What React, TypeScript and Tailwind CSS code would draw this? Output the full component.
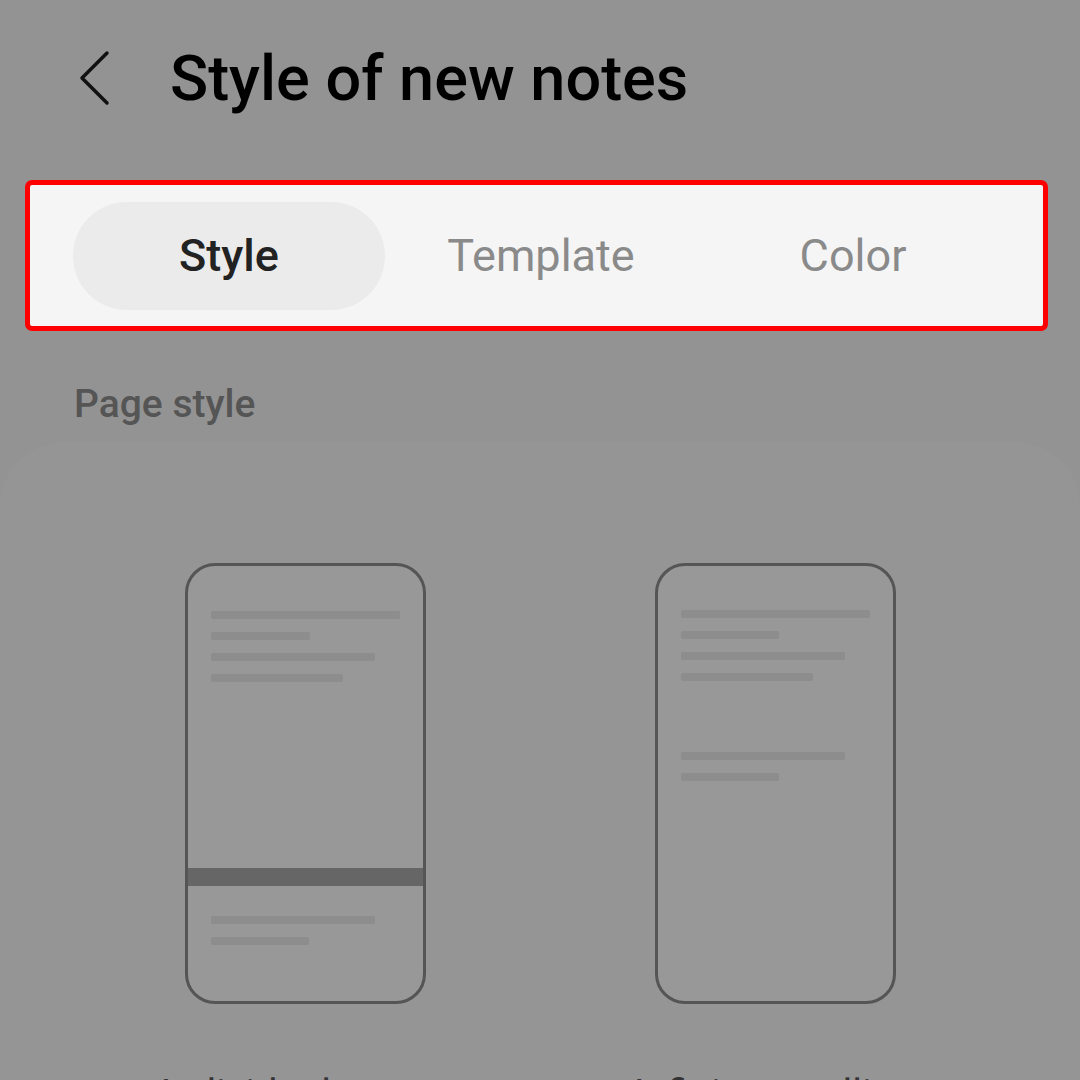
import React from "react";

function PhoneA() {
  return (
    <div className="w-[241px] h-[441px] rounded-[30px] border-[3px] border-[#555555] bg-[#989898] flex flex-col overflow-hidden">
      <div className="pl-[23px] pt-[45px] flex flex-col gap-[13px]">
        <div className="h-[8px] w-[189px] rounded-[2px] bg-[#8d8d8d]" />
        <div className="h-[8px] w-[99px] rounded-[2px] bg-[#8d8d8d]" />
        <div className="h-[8px] w-[164px] rounded-[2px] bg-[#8d8d8d]" />
        <div className="h-[8px] w-[132px] rounded-[2px] bg-[#8d8d8d]" />
      </div>
      <div className="mt-[186px] h-[18px] bg-[#666666]" />
      <div className="pl-[23px] pt-[30px] flex flex-col gap-[13px]">
        <div className="h-[8px] w-[164px] rounded-[2px] bg-[#8d8d8d]" />
        <div className="h-[8px] w-[98px] rounded-[2px] bg-[#8d8d8d]" />
      </div>
    </div>
  );
}

function PhoneB() {
  return (
    <div className="w-[241px] h-[441px] rounded-[30px] border-[3px] border-[#555555] bg-[#989898] flex flex-col overflow-hidden">
      <div className="pl-[23px] pt-[44px] flex flex-col gap-[13px]">
        <div className="h-[8px] w-[189px] rounded-[2px] bg-[#8d8d8d]" />
        <div className="h-[8px] w-[98px] rounded-[2px] bg-[#8d8d8d]" />
        <div className="h-[8px] w-[164px] rounded-[2px] bg-[#8d8d8d]" />
        <div className="h-[8px] w-[132px] rounded-[2px] bg-[#8d8d8d]" />
      </div>
      <div className="pl-[23px] pt-[71px] flex flex-col gap-[13px]">
        <div className="h-[8px] w-[164px] rounded-[2px] bg-[#8d8d8d]" />
        <div className="h-[8px] w-[98px] rounded-[2px] bg-[#8d8d8d]" />
      </div>
    </div>
  );
}

export default function App() {
  return (
    <div
      className="w-[1080px] h-[1080px] bg-[#939393] overflow-hidden flex flex-col"
      style={{ fontFamily: "Roboto, 'Noto Sans', sans-serif" }}
    >
      <div className="h-[156px] flex items-center shrink-0">
        <svg
          className="ml-[78px]"
          width="34"
          height="56"
          viewBox="0 0 34 56"
          fill="none"
          stroke="#111111"
          strokeWidth="3.5"
          strokeLinecap="round"
          strokeLinejoin="round"
        >
          <path d="M29 3 L4 28 L29 53" />
        </svg>
        <div className="ml-[58px] text-[63px] font-medium text-black leading-none">
          Style of new notes
        </div>
      </div>

      <div className="ml-[25px] mr-[32px] mt-[24px] h-[151px] shrink-0 border-[5px] border-[#ff0000] rounded-[7px] bg-[#f5f5f5] flex items-center pl-[43px]">
        <div className="w-[312px] h-[108px] rounded-full bg-[#ebebeb] flex items-center justify-center text-[45px] font-medium text-[#222222]">
          Style
        </div>
        <div className="w-[312px] flex items-center justify-center text-[45px] text-[#8a8a8a]">
          Template
        </div>
        <div className="w-[312px] flex items-center justify-center text-[45px] text-[#8a8a8a]">
          Color
        </div>
      </div>

      <div className="mt-[50px] pl-[74px] text-[39px] font-medium text-[#555555] leading-[46px] shrink-0">
        Page style
      </div>

      <div className="mt-[15px] flex-1 rounded-t-[64px] bg-[#959595] grid grid-cols-2 px-[70px] pt-[121px]">
        <div className="flex flex-col items-center">
          <PhoneA />
          <div className="mt-[67px] text-[40px] text-[#333333] leading-[48px] whitespace-nowrap">Individual pages</div>
        </div>
        <div className="flex flex-col items-center">
          <PhoneB />
          <div className="mt-[67px] text-[40px] text-[#333333] leading-[48px] whitespace-nowrap">Infinite scrolling</div>
        </div>
      </div>
    </div>
  );
}
